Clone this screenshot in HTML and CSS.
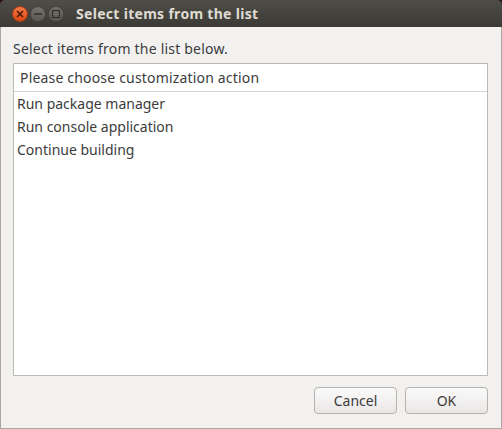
FILE: index.html
```html
<!DOCTYPE html>
<html lang="en">
<head>
    <meta charset="UTF-8">
    <meta name="viewport" content="width=device-width, initial-scale=1.0">
    <title>Select items from the list</title>
    <link rel="stylesheet" href="styles.css">
</head>
<body>
    <main class="ventana">
        <header class="titulo">
            <div class="controles">
                <span class="control cerrar">
                    <svg width="8" height="8" viewBox="0 0 8 8"><path d="M1 1 7 7M7 1 1 7" stroke="#4a1a08" stroke-width="1.6"/></svg>
                </span>
                <span class="control">
                    <svg width="10" height="8" viewBox="0 0 10 8"><path d="M1 4H9" stroke="#2f2e2a" stroke-width="1.5"/></svg>
                </span>
                <span class="control">
                    <svg width="10" height="10" viewBox="0 0 10 10"><rect x="1.5" y="1.5" width="7" height="7" fill="none" stroke="#2f2e2a" stroke-width="1.2"/></svg>
                </span>
            </div>
            <h1>Select items from the list</h1>
        </header>
        <section class="contenido">
            <p class="etiqueta">Select items from the list below.</p>
            <div class="lista">
                <div class="cabecera">Please choose customization action</div>
                <ul>
                    <li>Run package manager</li>
                    <li>Run console application</li>
                    <li>Continue building</li>
                </ul>
            </div>
            <footer class="botones">
                <button>Cancel</button>
                <button>OK</button>
            </footer>
        </section>
    </main>
</body>
</html>
```

FILE: styles.css
```css
html, body {
    height: 100%;
}
body {
    margin: 0;
    background-color: #2c0f22;
    font-family: "Noto Sans", sans-serif;
    font-size: 14px;
    color: #3c3c3c;
}
.ventana {
    display: flex;
    flex-direction: column;
    height: 429px;
    border-radius: 5px 5px 0 0;
    overflow: hidden;
}
.titulo {
    display: flex;
    align-items: center;
    height: 27px;
    flex: none;
    padding-left: 12px;
    background: linear-gradient(#4f4d47, #3b3a35);
}
.titulo h1 {
    margin: 0 0 0 12px;
    font-size: 14px;
    font-weight: 700;
    color: #dfdbd2;
    letter-spacing: 0.3px;
}
.controles {
    display: flex;
    gap: 2px;
}
.control {
    display: flex;
    align-items: center;
    justify-content: center;
    box-sizing: border-box;
    width: 16px;
    height: 16px;
    border: 1px solid #45443f;
    border-radius: 50%;
    background: linear-gradient(#74726b, #5a5953);
}
.cerrar {
    border-color: #a83c14;
    background: linear-gradient(#f5794a, #dd4814);
}
.contenido {
    display: flex;
    flex-direction: column;
    flex: 1;
    padding: 0 13px 14px 12px;
    background-color: #f2f1f0;
    border: 1px solid #a8a7a2;
    border-top: none;
}
.etiqueta {
    margin: 0;
    height: 36px;
    line-height: 44px;
    letter-spacing: 0.2px;
}
.lista {
    flex: 1;
    background-color: #fff;
    border: 1px solid #bcbab6;
}
.cabecera {
    height: 27px;
    line-height: 27px;
    padding-left: 6px;
    border-bottom: 1px solid #d6d5d2;
    letter-spacing: 0.18px;
}
.lista ul {
    list-style: none;
    margin: 0;
    padding: 0 3px;
}
.lista li {
    height: 23px;
    line-height: 23px;
}
.botones {
    display: flex;
    justify-content: flex-end;
    gap: 8px;
    margin-top: 11px;
}
button {
    width: 83px;
    height: 27px;
    padding: 0;
    font-family: inherit;
    font-size: 14px;
    color: #3c3c3c;
    background: linear-gradient(#fbfafa, #e9e7e6);
    border: 1px solid #b5b3ae;
    border-radius: 4px;
}
```
